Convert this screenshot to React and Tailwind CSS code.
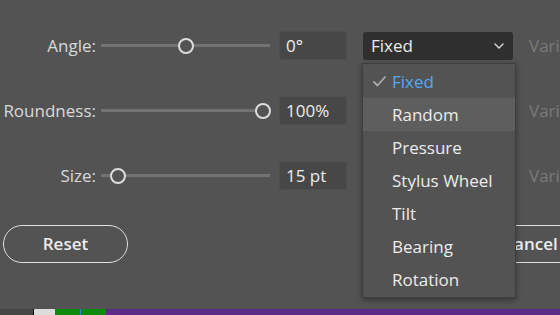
import React from "react";

const rows = [
  { label: "Angle:", value: "0°", thumb: 85 },
  { label: "Roundness:", value: "100%", thumb: 162 },
  { label: "Size:", value: "15 pt", thumb: 17 },
];

const options = ["Fixed", "Random", "Pressure", "Stylus Wheel", "Tilt", "Bearing", "Rotation"];

function Slider({ thumb }) {
  return (
    <div className="relative w-[169px] h-[16px] flex items-center shrink-0">
      <div className="w-full h-[3px] bg-[#727272]" />
      <div
        className="absolute top-1/2 -translate-y-1/2 -translate-x-1/2 w-[16px] h-[16px] rounded-full border-2 border-[#dcdcdc] bg-[#535353]"
        style={{ left: thumb }}
      />
    </div>
  );
}

function Chevron() {
  return (
    <svg width="10" height="6" viewBox="0 0 10 6" fill="none">
      <path d="M1 1l4 4 4-4" stroke="#d8d8d8" strokeWidth="1.4" strokeLinecap="round" strokeLinejoin="round" />
    </svg>
  );
}

function Check() {
  return (
    <svg width="13" height="11" viewBox="0 0 13 11" fill="none">
      <path d="M1 6l3.5 3.5L12 1" stroke="#a9a9a9" strokeWidth="1.8" strokeLinecap="round" strokeLinejoin="round" />
    </svg>
  );
}

function Row({ label, value, thumb, first }) {
  return (
    <div className="flex items-center h-[29px] w-[700px]">
      <div className="w-[96px] shrink-0 text-right text-[#d9d9d9]">{label}</div>
      <div className="ml-[5px] shrink-0">
        <Slider thumb={thumb} />
      </div>
      <div className="ml-[9px] shrink-0 w-[68px] h-[29px] rounded-[3px] bg-[#474747] border border-[#4e4e4e] flex items-center px-[6px] text-[#ececec]">
        {value}
      </div>
      {first ? (
        <div className="ml-[16px] shrink-0 w-[150px] h-[28px] rounded-[3px] bg-[#2f2f2f] flex items-center justify-between pl-[8px] pr-[9px] text-[#ececec]">
          <span>Fixed</span>
          <Chevron />
        </div>
      ) : (
        <div className="ml-[16px] shrink-0 w-[150px]" />
      )}
      <div className="ml-[16px] shrink-0 text-[#7a7a7a]">Variable</div>
    </div>
  );
}

export default function App() {
  return (
    <div
      className="relative w-[560px] h-[315px] overflow-hidden bg-[#535353] flex flex-col text-[17px]"
      style={{ fontFamily: "'Open Sans', 'Liberation Sans', sans-serif" }}
    >
      <div className="flex flex-col pt-[31px] gap-[36px] whitespace-nowrap">
        {rows.map((r, i) => (
          <Row key={r.label} {...r} first={i === 0} />
        ))}
      </div>

      {/* buttons */}
      <div className="flex items-center justify-between mt-[35px] pl-[3px] mr-[-33px]">
        <button className="w-[125px] h-[38px] rounded-full border-[1.5px] border-[#dedede] text-[#ececec] font-semibold">
          Reset
        </button>
        <button className="w-[125px] h-[38px] rounded-full border-[1.5px] border-[#dedede] text-[#ececec] font-semibold">
          Cancel
        </button>
      </div>

      {/* bottom strip */}
      <div className="mt-auto h-[6px] flex">
        <div className="w-[33px] bg-[#464646]" />
        <div className="w-[1px] bg-black" />
        <div className="w-[21px] bg-[#dcdcdc]" />
        <div className="w-[25px] bg-[#0c8a0c]" />
        <div className="w-[1px] bg-[#3a7ad8]" />
        <div className="w-[25px] bg-[#0c8a0c]" />
        <div className="flex-1 bg-[#5a2a84]" />
      </div>

      {/* dropdown menu */}
      <div className="absolute left-[362px] top-[63px] w-[154px] py-[1px] bg-[#535353] border border-[#3e3e3e] shadow-[0_2px_6px_rgba(0,0,0,0.35)]">
        {options.map((o, i) => (
          <div
            key={o}
            className={
              "h-[33px] flex items-center whitespace-nowrap " +
              (i === 1 ? "bg-[#5e5e5e] " : "") +
              (i === 0 ? "text-[#52a9f2]" : "text-[#ececec]")
            }
          >
            <span className="w-[29px] flex justify-end pr-[6px]">{i === 0 && <Check />}</span>
            <span>{o}</span>
          </div>
        ))}
      </div>
    </div>
  );
}
